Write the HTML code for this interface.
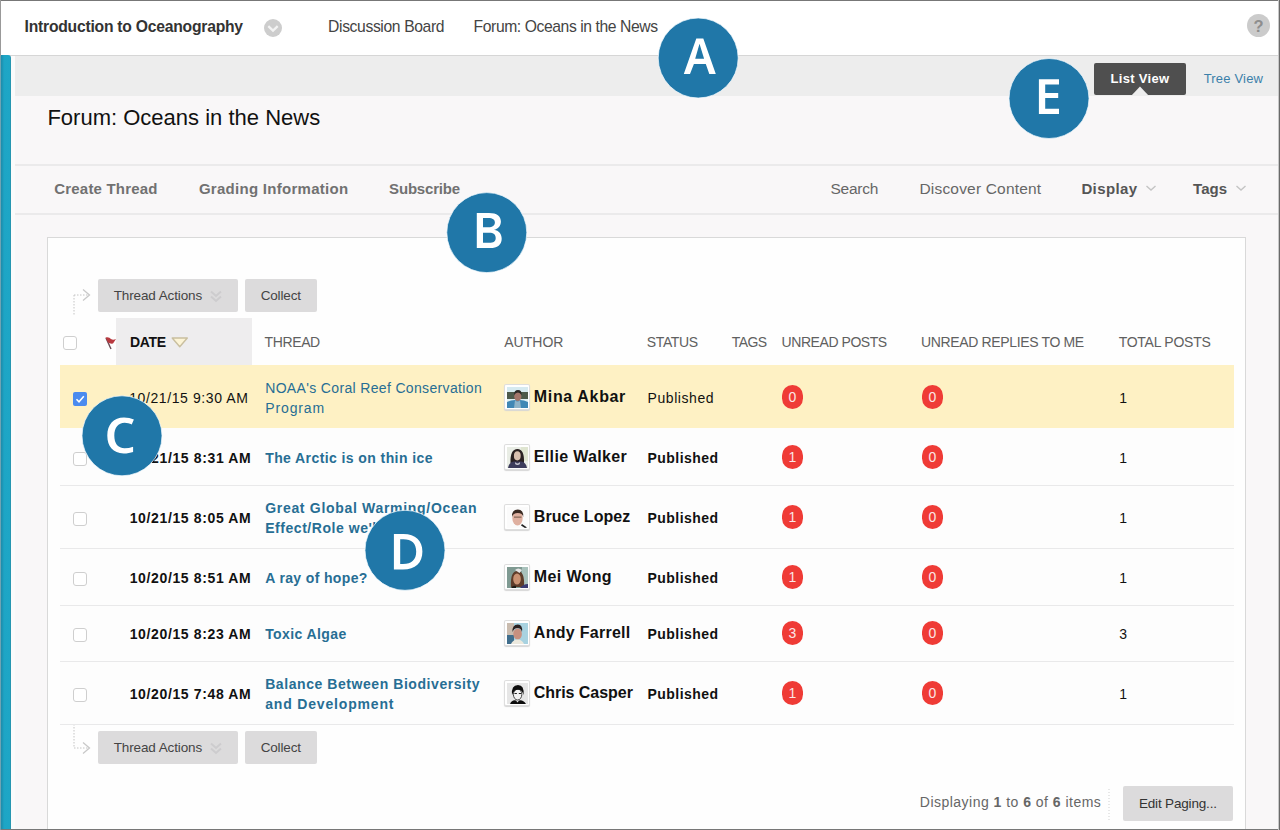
<!DOCTYPE html>
<html><head><meta charset="utf-8">
<style>
html,body{margin:0;padding:0;}
body{width:1280px;height:830px;position:relative;overflow:hidden;background:#f9f7f8;font-family:"Liberation Sans",sans-serif;}
.a{position:absolute;}
.t{position:absolute;white-space:pre;}
.t b{font-weight:700;}
.btn{position:absolute;background:#dcdbdc;border-radius:2px;}
.cb{position:absolute;width:12px;height:12px;border:1px solid #cfcfcf;border-radius:3px;background:#fff;}
.row{position:absolute;left:60px;width:1174px;border-bottom:1px solid #e9e9ea;background:#fdfdfd;}
.badge{position:absolute;width:21px;height:24px;border-radius:11px;background:#ef3b36;color:#fbe6e6;font-size:14px;line-height:25px;text-align:center;}
.circ{position:absolute;width:80px;height:80px;border-radius:50%;background:#2077a9;color:#fff;font-size:50px;line-height:80px;text-align:center;}
.av{position:absolute;width:21px;height:22px;border:1px solid #fff;box-shadow:0 0 1px 1px #d8d8d8;overflow:hidden;}
</style></head>
<body>
<!-- header -->
<div class="a" style="left:0;top:0;width:1280px;height:55px;background:#fff;border-bottom:1px solid #d6d6d6;"></div>
<!-- chevron circle -->
<div class="a" style="left:264px;top:19px;width:18px;height:18px;border-radius:50%;background:#cdcdcd;"></div>
<svg class="a" style="left:264px;top:19px" width="18" height="18"><path d="M4.3 7.2 L9 11.6 L13.7 7.2" stroke="#f3f3f3" stroke-width="2.3" fill="none"/></svg>
<!-- help -->
<div class="a" style="left:1247px;top:14px;width:23px;height:23px;border-radius:50%;background:#cbcbcb;color:#8e8e8e;font-size:16.5px;font-weight:700;line-height:25px;text-align:center;">?</div>

<!-- teal bar -->
<div class="a" style="left:1px;top:55px;width:10px;height:775px;background:linear-gradient(90deg,#1c8cab 0px,#1d96b6 1.5px,#1da5c5 3px,#1ea6c6 8.5px,#2a8ea6 10px);border-radius:0 3px 0 0;"></div>
<div class="a" style="left:11px;top:56px;width:4px;height:774px;background:#fbfbfb;"></div>
<!-- gray band -->
<div class="a" style="left:15px;top:56px;width:1265px;height:40px;background:#ededed;"></div>
<!-- lines -->
<div class="a" style="left:15px;top:164px;width:1265px;height:2px;background:#ebeaeb;"></div>
<div class="a" style="left:15px;top:213px;width:1265px;height:2px;background:#ebeaeb;"></div>

<!-- list view tab -->
<div class="a" style="left:1094px;top:63px;width:92px;height:32px;background:#4f4f4f;border-radius:2px;"></div>
<svg class="a" style="left:1128px;top:85px" width="24" height="11"><path d="M3 11 L12 1.5 L21 11 Z" fill="#ededed"/></svg>

<!-- panel -->
<div class="a" style="left:47px;top:237px;width:1197px;height:600px;background:#fefefe;border:1px solid #d9d9d9;"></div>

<!-- arrows -->
<svg class="a" style="left:66px;top:284px" width="30" height="36">
 <path d="M8 11 V32" stroke="#c4c4c4" stroke-width="1" stroke-dasharray="1.5 1.5" fill="none"/>
 <path d="M8 11 H23" stroke="#c4c4c4" stroke-width="1" stroke-dasharray="1.5 1.5" fill="none"/>
 <path d="M17 5.5 L23.5 11 L17 16.5" stroke="#c8c8c8" stroke-width="1.3" fill="none"/>
</svg>
<svg class="a" style="left:66px;top:722px" width="30" height="36">
 <path d="M8 2 V26" stroke="#c4c4c4" stroke-width="1" stroke-dasharray="1.5 1.5" fill="none"/>
 <path d="M8 26 H23" stroke="#c4c4c4" stroke-width="1" stroke-dasharray="1.5 1.5" fill="none"/>
 <path d="M17 20.5 L23.5 26 L17 31.5" stroke="#c8c8c8" stroke-width="1.3" fill="none"/>
</svg>
<!-- buttons -->
<div class="btn" style="left:98px;top:279px;width:140px;height:33px;"></div>
<div class="btn" style="left:245px;top:279px;width:72px;height:33px;"></div>
<div class="btn" style="left:98px;top:731px;width:140px;height:33px;"></div>
<div class="btn" style="left:245px;top:731px;width:72px;height:33px;"></div>
<svg class="a" style="left:208px;top:288px" width="16" height="16"><path d="M3 3.5 L8 8 L13 3.5 M3 8.5 L8 13 L13 8.5" stroke="#cdccce" stroke-width="2" fill="none"/></svg>
<svg class="a" style="left:208px;top:740px" width="16" height="16"><path d="M3 3.5 L8 8 L13 3.5 M3 8.5 L8 13 L13 8.5" stroke="#cdccce" stroke-width="2" fill="none"/></svg>

<!-- table header -->
<div class="a" style="left:116px;top:318px;width:136px;height:47px;background:#eeedee;"></div>
<div class="cb" style="left:63px;top:336px;"></div>
<svg class="a" style="left:103px;top:335px" width="16" height="16">
 <path d="M3 3 L8 14" stroke="#6a4b55" stroke-width="1.4"/>
 <path d="M2.5 2.5 Q6 1.5 8 4 Q10 5.5 13 4 L10 8.5 Q7 9 5 7.5 Z" fill="#b8393f"/>
</svg>
<svg class="a" style="left:170px;top:336px" width="20" height="13"><path d="M2.2 2 H17.3 L9.75 10.8 Z" fill="#fcf4d6" stroke="#c9bf9f" stroke-width="1.4" stroke-linejoin="round"/></svg>

<!-- rows -->
<div class="a" style="left:60px;top:365px;width:1174px;height:63px;background:#fef1c4;"></div>
<div class="a" style="left:60px;top:428px;width:1174px;height:296px;background:#fdfdfd;"></div>
<div class="a" style="left:60px;top:485px;width:1174px;height:1px;background:#e9e9ea;"></div>
<div class="a" style="left:60px;top:548px;width:1174px;height:1px;background:#e9e9ea;"></div>
<div class="a" style="left:60px;top:605px;width:1174px;height:1px;background:#e9e9ea;"></div>
<div class="a" style="left:60px;top:661px;width:1174px;height:1px;background:#e9e9ea;"></div>
<div class="a" style="left:60px;top:724px;width:1174px;height:1px;background:#e9e9ea;"></div>

<!-- checkboxes -->
<div class="a" style="left:73px;top:392px;width:14px;height:14px;border-radius:2px;background:#4a8bef;"></div>
<svg class="a" style="left:73px;top:392px" width="14" height="14"><path d="M3.5 7.2 L6 9.8 L10.8 4.2" stroke="#fff" stroke-width="1.5" fill="none"/></svg>
<div class="cb" style="left:73px;top:452px;"></div>
<div class="cb" style="left:73px;top:512px;"></div>
<div class="cb" style="left:73px;top:572px;"></div>
<div class="cb" style="left:73px;top:628px;"></div>
<div class="cb" style="left:73px;top:688px;"></div>

<!-- avatars -->
<svg width="0" height="0" style="position:absolute"><filter id="bl"><feGaussianBlur stdDeviation="0.45"/></filter></svg>
<div class="a" style="left:505px;top:385px;width:24px;height:24px;background:#fff;border-radius:1px;box-shadow:0 0 0 1px #dedede,0 1px 1px 1px #d6d6d6;"></div>
<svg class="a" style="left:507px;top:387px" width="21" height="21"><g filter="url(#bl)"><rect width="21" height="21" fill="#d6eaf0"/><rect y="5" width="21" height="7" fill="#4d5a4c"/><rect y="12" width="21" height="4" fill="#dfeff3"/><path d="M0 21 V15 Q4 13 8 13 H13 Q17 13 21 15 V21 Z" fill="#3f87b5"/><path d="M8 13 Q10.5 16 13 13 L14 21 H7 Z" fill="#8fb3c8"/><ellipse cx="10.8" cy="9.5" rx="3.6" ry="4.6" fill="#a3756a"/><path d="M7 8 Q7 3 11 3 Q15 3 14.6 8 Q13 5.5 11 5.5 Q8.5 5.5 7 8Z" fill="#2d2a28"/></g></svg>
<div class="a" style="left:505px;top:445px;width:24px;height:24px;background:#fff;border-radius:1px;box-shadow:0 0 0 1px #dedede,0 1px 1px 1px #d6d6d6;"></div>
<svg class="a" style="left:507px;top:447px" width="21" height="21"><g filter="url(#bl)"><rect width="21" height="21" fill="#e9ede5"/><rect x="14" width="7" height="14" fill="#dfe5d0"/><path d="M3.5 16 Q3 2 10.5 2 Q17.5 2 17 16 Z" fill="#2a2222"/><ellipse cx="10.3" cy="8.8" rx="3.4" ry="4.6" fill="#d9c1b0"/><path d="M1 21 Q2 15 7 14.5 H14 Q19 15 20 21 Z" fill="#3e3d5c"/><path d="M8.5 15 Q10.5 18 12.5 15 L13 17 Q10.5 19 8 17Z" fill="#c9c9d4"/></g></svg>
<div class="a" style="left:505px;top:505px;width:24px;height:24px;background:#fff;border-radius:1px;box-shadow:0 0 0 1px #dedede,0 1px 1px 1px #d6d6d6;"></div>
<svg class="a" style="left:507px;top:507px" width="21" height="21"><g filter="url(#bl)"><rect width="21" height="21" fill="#fbfbfb"/><ellipse cx="10.5" cy="11" rx="5.2" ry="7.6" fill="#dfb0a0"/><path d="M5 10 Q4.5 2.5 10.8 2.5 Q16.8 2.5 16.2 10 Q15.5 6 10.8 6 Q6 6 5 10Z" fill="#3a2a22"/><rect x="7" y="9.5" width="7.5" height="1.3" fill="#8a6a5a"/><path d="M15 17 L20 20.5 L18 21 L14 18.5Z" fill="#222"/></g></svg>
<div class="a" style="left:505px;top:565px;width:24px;height:24px;background:#fff;border-radius:1px;box-shadow:0 0 0 1px #dedede,0 1px 1px 1px #d6d6d6;"></div>
<svg class="a" style="left:507px;top:567px" width="21" height="21"><g filter="url(#bl)"><rect width="21" height="21" fill="#7f9a92"/><rect x="15" width="6" height="21" fill="#a9c2bc"/><path d="M4 20 Q3 4 10.5 4 Q18 4 17 20 Z" fill="#5e3d2a"/><ellipse cx="10" cy="12" rx="3.8" ry="5.6" fill="#c99272"/><path d="M8 3 Q11 0 15 3 L12.5 6 Z" fill="#e6e6e6"/><path d="M13 21 Q16 17 21 17 V21Z" fill="#3a3a72"/><path d="M4 21 Q6 18 9 19 V21Z" fill="#1f1a18"/></g></svg>
<div class="a" style="left:505px;top:621px;width:24px;height:24px;background:#fff;border-radius:1px;box-shadow:0 0 0 1px #dedede,0 1px 1px 1px #d6d6d6;"></div>
<svg class="a" style="left:507px;top:623px" width="21" height="21"><g filter="url(#bl)"><rect width="21" height="21" fill="#a8d2e0"/><rect width="7" height="21" fill="#c9bbae"/><rect y="12" width="7" height="9" fill="#3f6e8c"/><ellipse cx="10.6" cy="11" rx="4.3" ry="5.8" fill="#c7907f"/><path d="M5.5 9 Q5 1.5 10.8 1.5 Q16 1.5 15 9 Q14 5 10.5 5 Q7 5 5.5 9Z" fill="#2a2020"/><path d="M4 21 Q6 16.5 10.5 16.5 Q15 16.5 17 21Z" fill="#ece9de"/></g></svg>
<div class="a" style="left:505px;top:681px;width:24px;height:24px;background:#fff;border-radius:1px;box-shadow:0 0 0 1px #dedede,0 1px 1px 1px #d6d6d6;"></div>
<svg class="a" style="left:507px;top:683px" width="21" height="21"><g filter="url(#bl)"><rect width="21" height="21" fill="#e6e6e6"/><ellipse cx="10.6" cy="11.5" rx="4.2" ry="5.5" fill="#f2f2f2" stroke="#333" stroke-width="0.9"/><path d="M5 12 Q4 2 11 2 Q17.5 2 16.5 12 Q15 6.5 11 6.8 Q7 6.8 5 12Z" fill="#111"/><rect x="7.5" y="10" width="2.4" height="1" fill="#222"/><rect x="11.8" y="10" width="2.4" height="1" fill="#222"/><path d="M3 21 Q5 16.5 9 17.5 L10.5 19.5 L12 17.5 Q16 16.5 19 21Z" fill="#0f0f0f"/></g></svg>

<!-- badges -->
<div class="badge" style="left:782px;top:385px;">0</div>
<div class="badge" style="left:922px;top:385px;">0</div>
<div class="badge" style="left:782px;top:445px;">1</div>
<div class="badge" style="left:922px;top:445px;">0</div>
<div class="badge" style="left:782px;top:505px;">1</div>
<div class="badge" style="left:922px;top:505px;">0</div>
<div class="badge" style="left:782px;top:565px;">1</div>
<div class="badge" style="left:922px;top:565px;">0</div>
<div class="badge" style="left:782px;top:621px;">3</div>
<div class="badge" style="left:922px;top:621px;">0</div>
<div class="badge" style="left:782px;top:681px;">1</div>
<div class="badge" style="left:922px;top:681px;">0</div>

<!-- display/tags chevrons -->
<svg class="a" style="left:1144px;top:183px" width="14" height="10"><path d="M2.5 3 L7 7 L11.5 3" stroke="#c4c4c4" stroke-width="1.4" fill="none"/></svg>
<svg class="a" style="left:1234px;top:183px" width="14" height="10"><path d="M2.5 3 L7 7 L11.5 3" stroke="#c4c4c4" stroke-width="1.4" fill="none"/></svg>

<!-- footer -->
<svg class="a" style="left:1108px;top:789px" width="2" height="32"><path d="M1 0 V32" stroke="#d0d0d0" stroke-width="1" stroke-dasharray="1 2"/></svg>
<div class="btn" style="left:1123px;top:786px;width:110px;height:35px;"></div>

<div class="t" style="left:24.6px;top:17.6px;font-size:15.7px;line-height:18.8px;font-weight:700;color:#333;letter-spacing:-0.236px;">Introduction to Oceanography</div>
<div class="t" style="left:328.1px;top:17.9px;font-size:15.7px;line-height:18.8px;font-weight:400;color:#444;letter-spacing:-0.379px;">Discussion Board</div>
<div class="t" style="left:473.6px;top:17.9px;font-size:15.7px;line-height:18.8px;font-weight:400;color:#444;letter-spacing:-0.414px;">Forum: Oceans in the News</div>
<div class="t" style="left:47.4px;top:104.5px;font-size:22px;line-height:26.4px;font-weight:400;color:#111;letter-spacing:0.005px;">Forum: Oceans in the News</div>
<div class="t" style="left:1110.6px;top:70.9px;font-size:13px;line-height:15.6px;font-weight:700;color:#fff;letter-spacing:0.297px;">List View</div>
<div class="t" style="left:1203.7px;top:70.9px;font-size:13px;line-height:15.6px;font-weight:400;color:#3b80aa;letter-spacing:0.186px;">Tree View</div>
<div class="t" style="left:54.3px;top:179.8px;font-size:15px;line-height:18.0px;font-weight:700;color:#717171;letter-spacing:0.185px;">Create Thread</div>
<div class="t" style="left:198.9px;top:179.8px;font-size:15px;line-height:18.0px;font-weight:700;color:#717171;letter-spacing:0.279px;">Grading Information</div>
<div class="t" style="left:389.1px;top:179.8px;font-size:15px;line-height:18.0px;font-weight:700;color:#717171;letter-spacing:-0.191px;">Subscribe</div>
<div class="t" style="left:830.4px;top:179.5px;font-size:15.5px;line-height:18.6px;font-weight:400;color:#666;letter-spacing:-0.205px;">Search</div>
<div class="t" style="left:919.5px;top:179.5px;font-size:15.5px;line-height:18.6px;font-weight:400;color:#666;letter-spacing:0.181px;">Discover Content</div>
<div class="t" style="left:1081.4px;top:179.8px;font-size:15px;line-height:18.0px;font-weight:700;color:#555;letter-spacing:0.390px;">Display</div>
<div class="t" style="left:1193.1px;top:179.8px;font-size:15px;line-height:18.0px;font-weight:700;color:#555;letter-spacing:0.031px;">Tags</div>
<div class="t" style="left:113.7px;top:288.4px;font-size:13.5px;line-height:16.2px;font-weight:400;color:#444;letter-spacing:-0.120px;">Thread Actions</div>
<div class="t" style="left:260.7px;top:288.4px;font-size:13.5px;line-height:16.2px;font-weight:400;color:#444;letter-spacing:-0.161px;">Collect</div>
<div class="t" style="left:113.7px;top:740.2px;font-size:13.5px;line-height:16.2px;font-weight:400;color:#444;letter-spacing:-0.120px;">Thread Actions</div>
<div class="t" style="left:260.7px;top:740.2px;font-size:13.5px;line-height:16.2px;font-weight:400;color:#444;letter-spacing:-0.161px;">Collect</div>
<div class="t" style="left:129.9px;top:333.7px;font-size:14px;line-height:16.8px;font-weight:700;color:#111;letter-spacing:-0.259px;">DATE</div>
<div class="t" style="left:264.6px;top:333.7px;font-size:14px;line-height:16.8px;font-weight:400;color:#606060;letter-spacing:-0.392px;">THREAD</div>
<div class="t" style="left:504.2px;top:333.7px;font-size:14px;line-height:16.8px;font-weight:400;color:#606060;letter-spacing:0.025px;">AUTHOR</div>
<div class="t" style="left:646.7px;top:333.7px;font-size:14px;line-height:16.8px;font-weight:400;color:#606060;letter-spacing:-0.331px;">STATUS</div>
<div class="t" style="left:731.7px;top:333.7px;font-size:14px;line-height:16.8px;font-weight:400;color:#606060;letter-spacing:-0.526px;">TAGS</div>
<div class="t" style="left:781.6px;top:333.7px;font-size:14px;line-height:16.8px;font-weight:400;color:#606060;letter-spacing:-0.443px;">UNREAD POSTS</div>
<div class="t" style="left:921.1px;top:333.7px;font-size:14px;line-height:16.8px;font-weight:400;color:#606060;letter-spacing:-0.356px;">UNREAD REPLIES TO ME</div>
<div class="t" style="left:1118.7px;top:333.7px;font-size:14px;line-height:16.8px;font-weight:400;color:#606060;letter-spacing:-0.256px;">TOTAL POSTS</div>
<div class="t" style="left:129.2px;top:389.7px;font-size:14px;line-height:16.8px;font-weight:400;color:#111;letter-spacing:0.596px;">10/21/15 9:30 AM</div>
<div class="t" style="left:265.2px;top:379.5px;font-size:14px;line-height:16.8px;font-weight:400;color:#276e94;letter-spacing:0.343px;">NOAA's Coral Reef Conservation</div>
<div class="t" style="left:265.2px;top:399.7px;font-size:14px;line-height:16.8px;font-weight:400;color:#276e94;letter-spacing:0.885px;">Program</div>
<div class="t" style="left:533.8px;top:386.9px;font-size:16px;line-height:19.2px;font-weight:700;color:#111;letter-spacing:0.655px;">Mina Akbar</div>
<div class="t" style="left:647.6px;top:389.7px;font-size:14px;line-height:16.8px;font-weight:400;color:#111;letter-spacing:0.562px;">Published</div>
<div class="t" style="left:1119.2px;top:389.7px;font-size:14px;line-height:16.8px;font-weight:400;color:#111;letter-spacing:0.000px;">1</div>
<div class="t" style="left:129.7px;top:449.7px;font-size:14px;line-height:16.8px;font-weight:700;color:#111;letter-spacing:0.636px;">10/21/15 8:31 AM</div>
<div class="t" style="left:265.2px;top:449.7px;font-size:14px;line-height:16.8px;font-weight:700;color:#276e94;letter-spacing:0.412px;">The Arctic is on thin ice</div>
<div class="t" style="left:533.8px;top:446.9px;font-size:16px;line-height:19.2px;font-weight:700;color:#111;letter-spacing:0.347px;">Ellie Walker</div>
<div class="t" style="left:647.6px;top:449.7px;font-size:14px;line-height:16.8px;font-weight:700;color:#111;letter-spacing:0.437px;">Published</div>
<div class="t" style="left:1119.2px;top:449.7px;font-size:14px;line-height:16.8px;font-weight:400;color:#111;letter-spacing:0.000px;">1</div>
<div class="t" style="left:129.7px;top:509.7px;font-size:14px;line-height:16.8px;font-weight:700;color:#111;letter-spacing:0.636px;">10/21/15 8:05 AM</div>
<div class="t" style="left:265.2px;top:499.5px;font-size:14px;line-height:16.8px;font-weight:700;color:#276e94;letter-spacing:0.693px;">Great Global Warming/Ocean</div>
<div class="t" style="left:265.2px;top:519.7px;font-size:14px;line-height:16.8px;font-weight:700;color:#276e94;letter-spacing:0.543px;">Effect/Role we'll</div>
<div class="t" style="left:533.8px;top:506.9px;font-size:16px;line-height:19.2px;font-weight:700;color:#111;letter-spacing:0.043px;">Bruce Lopez</div>
<div class="t" style="left:647.6px;top:509.7px;font-size:14px;line-height:16.8px;font-weight:700;color:#111;letter-spacing:0.437px;">Published</div>
<div class="t" style="left:1119.2px;top:509.7px;font-size:14px;line-height:16.8px;font-weight:400;color:#111;letter-spacing:0.000px;">1</div>
<div class="t" style="left:129.7px;top:569.7px;font-size:14px;line-height:16.8px;font-weight:700;color:#111;letter-spacing:0.636px;">10/20/15 8:51 AM</div>
<div class="t" style="left:265.2px;top:569.7px;font-size:14px;line-height:16.8px;font-weight:700;color:#276e94;letter-spacing:0.362px;">A ray of hope?</div>
<div class="t" style="left:533.8px;top:566.9px;font-size:16px;line-height:19.2px;font-weight:700;color:#111;letter-spacing:0.371px;">Mei Wong</div>
<div class="t" style="left:647.6px;top:569.7px;font-size:14px;line-height:16.8px;font-weight:700;color:#111;letter-spacing:0.437px;">Published</div>
<div class="t" style="left:1119.2px;top:569.7px;font-size:14px;line-height:16.8px;font-weight:400;color:#111;letter-spacing:0.000px;">1</div>
<div class="t" style="left:129.7px;top:625.7px;font-size:14px;line-height:16.8px;font-weight:700;color:#111;letter-spacing:0.636px;">10/20/15 8:23 AM</div>
<div class="t" style="left:265.2px;top:625.7px;font-size:14px;line-height:16.8px;font-weight:700;color:#276e94;letter-spacing:0.407px;">Toxic Algae</div>
<div class="t" style="left:533.8px;top:622.9px;font-size:16px;line-height:19.2px;font-weight:700;color:#111;letter-spacing:0.281px;">Andy Farrell</div>
<div class="t" style="left:647.6px;top:625.7px;font-size:14px;line-height:16.8px;font-weight:700;color:#111;letter-spacing:0.437px;">Published</div>
<div class="t" style="left:1119.2px;top:625.7px;font-size:14px;line-height:16.8px;font-weight:400;color:#111;letter-spacing:0.000px;">3</div>
<div class="t" style="left:129.7px;top:685.7px;font-size:14px;line-height:16.8px;font-weight:700;color:#111;letter-spacing:0.636px;">10/20/15 7:48 AM</div>
<div class="t" style="left:265.2px;top:675.5px;font-size:14px;line-height:16.8px;font-weight:700;color:#276e94;letter-spacing:0.563px;">Balance Between Biodiversity</div>
<div class="t" style="left:265.2px;top:695.7px;font-size:14px;line-height:16.8px;font-weight:700;color:#276e94;letter-spacing:0.828px;">and Development</div>
<div class="t" style="left:533.8px;top:682.9px;font-size:16px;line-height:19.2px;font-weight:700;color:#111;letter-spacing:-0.049px;">Chris Casper</div>
<div class="t" style="left:647.6px;top:685.7px;font-size:14px;line-height:16.8px;font-weight:700;color:#111;letter-spacing:0.437px;">Published</div>
<div class="t" style="left:1119.2px;top:685.7px;font-size:14px;line-height:16.8px;font-weight:400;color:#111;letter-spacing:0.000px;">1</div>
<div class="t" style="left:919.8px;top:794.1px;font-size:14px;line-height:16.8px;font-weight:400;color:#666;letter-spacing:0.479px;">Displaying <b>1</b> to <b>6</b> of <b>6</b> items</div>
<div class="t" style="left:1138.9px;top:796.2px;font-size:13.5px;line-height:16.2px;font-weight:400;color:#333;letter-spacing:-0.170px;">Edit Paging...</div>

<!-- annotation circles -->
<svg class="a" style="left:0;top:0" width="1280" height="830">
<g fill="#2077a8" stroke="#f4fbff" stroke-opacity="0.7" stroke-width="1">
<circle cx="698.2" cy="58" r="40"/>
<circle cx="486.8" cy="232.6" r="40"/>
<circle cx="122" cy="435.8" r="40"/>
<circle cx="405" cy="550.3" r="40"/>
<circle cx="1049" cy="98.5" r="40"/>
</g>
<g fill="#fff" fill-rule="evenodd">
<path d="M696.3 38.6 H703.3 L715.8 73.9 H709.3 L705.8 64.1 H693.9 L690 73.9 H683.8 Z M699.5 43.8 L695.2 58.7 H704.1 Z"/>
<path d="M476.8 212.9 H489 C497 212.9 500.9 216 500.9 221.5 C500.9 226 498 229 494 229.8 C499 230.6 501.7 234 501.7 238.8 C501.7 244.8 497.5 248.1 490 248.1 H476.8 Z M483 218 H488.5 C492.5 218 494.9 219.5 494.9 222.5 C494.9 225.5 492.5 227.3 488.5 227.3 H483 Z M483 232.7 H489.3 C493.5 232.7 495.7 234.5 495.7 237.9 C495.7 241.2 493.5 242.7 489.3 242.7 H483 Z"/>
<path d="M133.9 419.6 C131 418.3 127.7 417.6 124 417.6 C113.7 417.6 107.3 424.5 107.3 435.6 C107.3 446.7 113.2 453.4 123.6 453.4 C127.4 453.4 130.5 452.8 133.1 451.9 L133.1 446.8 C130.3 447.8 127.5 448.3 124.6 448.3 C118 448.3 114.3 443.7 114.3 435.6 C114.3 427.7 118.2 422.8 124.7 422.8 C127.2 422.8 129.6 423.5 131.7 424.6 Z"/>
<path d="M393.9 533.9 H403.5 C415.5 533.9 422.4 540.5 422.4 551.4 C422.4 562.8 415.5 569.4 403 569.4 H393.9 Z M400.2 539.3 V564 H403 C411.8 564 416.2 559.8 416.2 551.5 C416.2 543.5 411.8 539.3 403.3 539.3 Z"/>
<path d="M1038.9 79.2 H1059 V84.6 H1045.2 V93 H1058.2 V98.1 H1045.2 V108.7 H1059 V114.1 H1038.9 Z"/>
</g>
</svg>

<!-- frame -->
<div class="a" style="left:0;top:0;width:1280px;height:1px;background:#777;"></div>
<div class="a" style="left:0;top:829px;width:1280px;height:1px;background:#777;"></div>
<div class="a" style="left:1279px;top:0;width:1px;height:830px;background:#6a6a6a;"></div>
<div class="a" style="left:1278px;top:0;width:1px;height:830px;background:#c8c8c8;"></div>
<div class="a" style="left:0;top:0;width:1px;height:56px;background:#999;"></div>
<div class="a" style="left:0;top:56px;width:1px;height:774px;background:#6fa3b3;"></div>
</body></html>
